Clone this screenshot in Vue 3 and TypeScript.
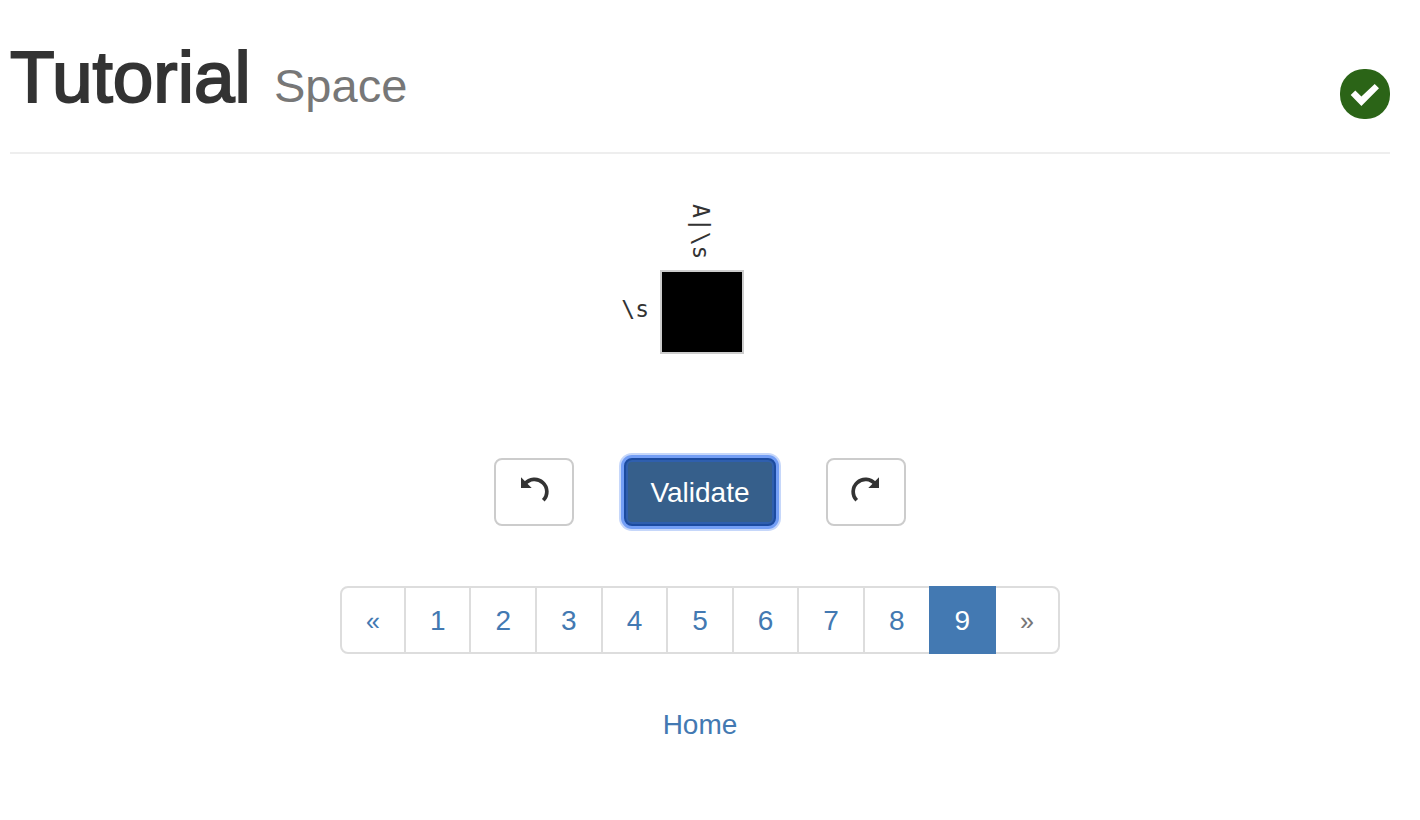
<script setup lang="ts">
import { ref } from 'vue'

const pages: number[] = [1, 2, 3, 4, 5, 6, 7, 8, 9]
const current = ref<number>(9)
const filled = ref<boolean>(true)
</script>

<template>
  <main class="page">
    <header class="page-header">
      <h1>Tutorial <small>Space</small></h1>
      <svg class="status" viewBox="0 0 50 50" role="img" aria-label="Solved">
        <rect width="50" height="50" rx="24" />
        <path d="M10.7 26 15.3 21.5 21.4 27.6 34.7 15 39 19.3 21.4 37z" />
      </svg>
    </header>

    <div class="board">
      <table>
        <thead>
          <tr>
            <td></td>
            <th scope="col" class="col-clue"><span>A|\s</span></th>
          </tr>
        </thead>
        <tbody>
          <tr>
            <th scope="row" class="row-clue">\s</th>
            <td class="square">
              <button type="button" :class="{ filled }" aria-label="Toggle cell" @click="filled = !filled"></button>
            </td>
          </tr>
        </tbody>
      </table>
    </div>

    <div class="actions">
      <button type="button" class="btn" aria-label="Undo">
        <svg viewBox="-1 1 28 28" aria-hidden="true">
          <path class="head" d="M0 .3 10.7 11H0z" />
          <path class="arc" d="M4 6.9A12.3 12.3 0 1 1 22.3 23.3" />
        </svg>
      </button>
      <button type="button" class="btn btn-primary">Validate</button>
      <button type="button" class="btn" aria-label="Redo">
        <svg viewBox="1 1 28 28" aria-hidden="true">
          <path class="head" d="M28 .3 17.3 11H28z" />
          <path class="arc" d="M24 6.9A12.3 12.3 0 1 0 5.7 23.3" />
        </svg>
      </button>
    </div>

    <nav aria-label="Levels">
      <ul class="pagination">
        <li class="step"><a href="#prev" aria-label="Previous">«</a></li>
        <li v-for="n in pages" :key="n" :class="{ active: n === current }">
          <a :href="'#' + n" @click="current = n">{{ n }}</a>
        </li>
        <li class="step disabled"><a href="#next" aria-label="Next">»</a></li>
      </ul>
    </nav>

    <p class="home"><a href="#home">Home</a></p>
  </main>
</template>

<style>
body {
  background: #fff;
}
</style>

<style scoped>
* {
  box-sizing: border-box;
}

.page {
  display: flex;
  flex-direction: column;
  padding: 37px 30px 20px 10px;
  font-family: "Liberation Sans", Helvetica, Arial, sans-serif;
  font-size: 28px;
  line-height: 40px;
  color: #333;
}

.page-header {
  display: flex;
  justify-content: space-between;
  align-items: flex-end;
  padding-bottom: 33px;
  border-bottom: 2px solid #eee;
}

h1 {
  margin: 0;
  padding-bottom: 2px;
  font-size: 73px;
  font-weight: 400;
  line-height: 80px;
  -webkit-text-stroke: 2px #333;
}

h1 small {
  margin-left: 3px;
  font-size: 47px;
  line-height: 1;
  color: #777;
  -webkit-text-stroke: 0;
}

.status {
  width: 50px;
  height: 50px;
  fill: #2b6417;
}

.status path {
  fill: #fff;
}

.board {
  display: flex;
  justify-content: center;
  padding: 50px 80px 0 0;
}

table {
  border-collapse: separate;
  border-spacing: 0;
}

td,
th {
  padding: 0;
  font-family: "DejaVu Sans Mono", Menlo, monospace;
  font-size: 23px;
  font-weight: 400;
  line-height: 28px;
}

.col-clue {
  padding: 0 2px 11px 0;
}

.col-clue span {
  display: inline-block;
  vertical-align: top;
  writing-mode: vertical-rl;
}

.row-clue {
  width: 84px;
  padding: 0 11px 6px 0;
  text-align: right;
}

.square button {
  display: block;
  width: 84px;
  height: 84px;
  padding: 0;
  border: 2px solid #ccc;
  border-radius: 0;
  background: #fff;
}

.square button.filled {
  background: #000;
}

.actions {
  display: flex;
  justify-content: center;
  gap: 50px;
  margin-top: 104px;
}

.btn {
  display: flex;
  align-items: center;
  justify-content: center;
  padding: 12px 24px;
  border: 2px solid #ccc;
  border-radius: 8px;
  background: #fff;
  font: inherit;
  color: #333;
}

.btn svg {
  width: 28px;
  height: 28px;
  overflow: visible;
}

.head {
  fill: #333;
}

.arc {
  fill: none;
  stroke: #333;
  stroke-width: 3.7;
}

.btn-primary {
  padding: 13px 24px 11px;
  border-color: #1b4ba0;
  background: #365f8b;
  color: #fff;
  box-shadow: inset 0 0 0 2px #2f5fae, 0 0 0 3px #739ef5, 0 0 0 5px #c6d7fa;
}

a {
  color: #4379b2;
  text-decoration: none;
}

.pagination {
  display: flex;
  justify-content: center;
  margin: 60px 0 0;
  padding: 0;
  list-style: none;
}

.pagination a {
  display: block;
  padding: 13px 24px 11px;
  border: 2px solid #ddd;
}

.pagination li + li {
  margin-left: -2px;
}

.pagination .step {
  font-size: 25px;
}

.pagination li:first-child a {
  border-radius: 8px 0 0 8px;
}

.pagination li:last-child a {
  border-radius: 0 8px 8px 0;
}

.pagination .active {
  position: relative;
  z-index: 1;
}

.pagination .active a {
  border-color: #4379b2;
  background: #4379b2;
  color: #fff;
}

.pagination .disabled a {
  color: #777;
}

.home {
  margin: 51px 0 0;
  text-align: center;
}
</style>
